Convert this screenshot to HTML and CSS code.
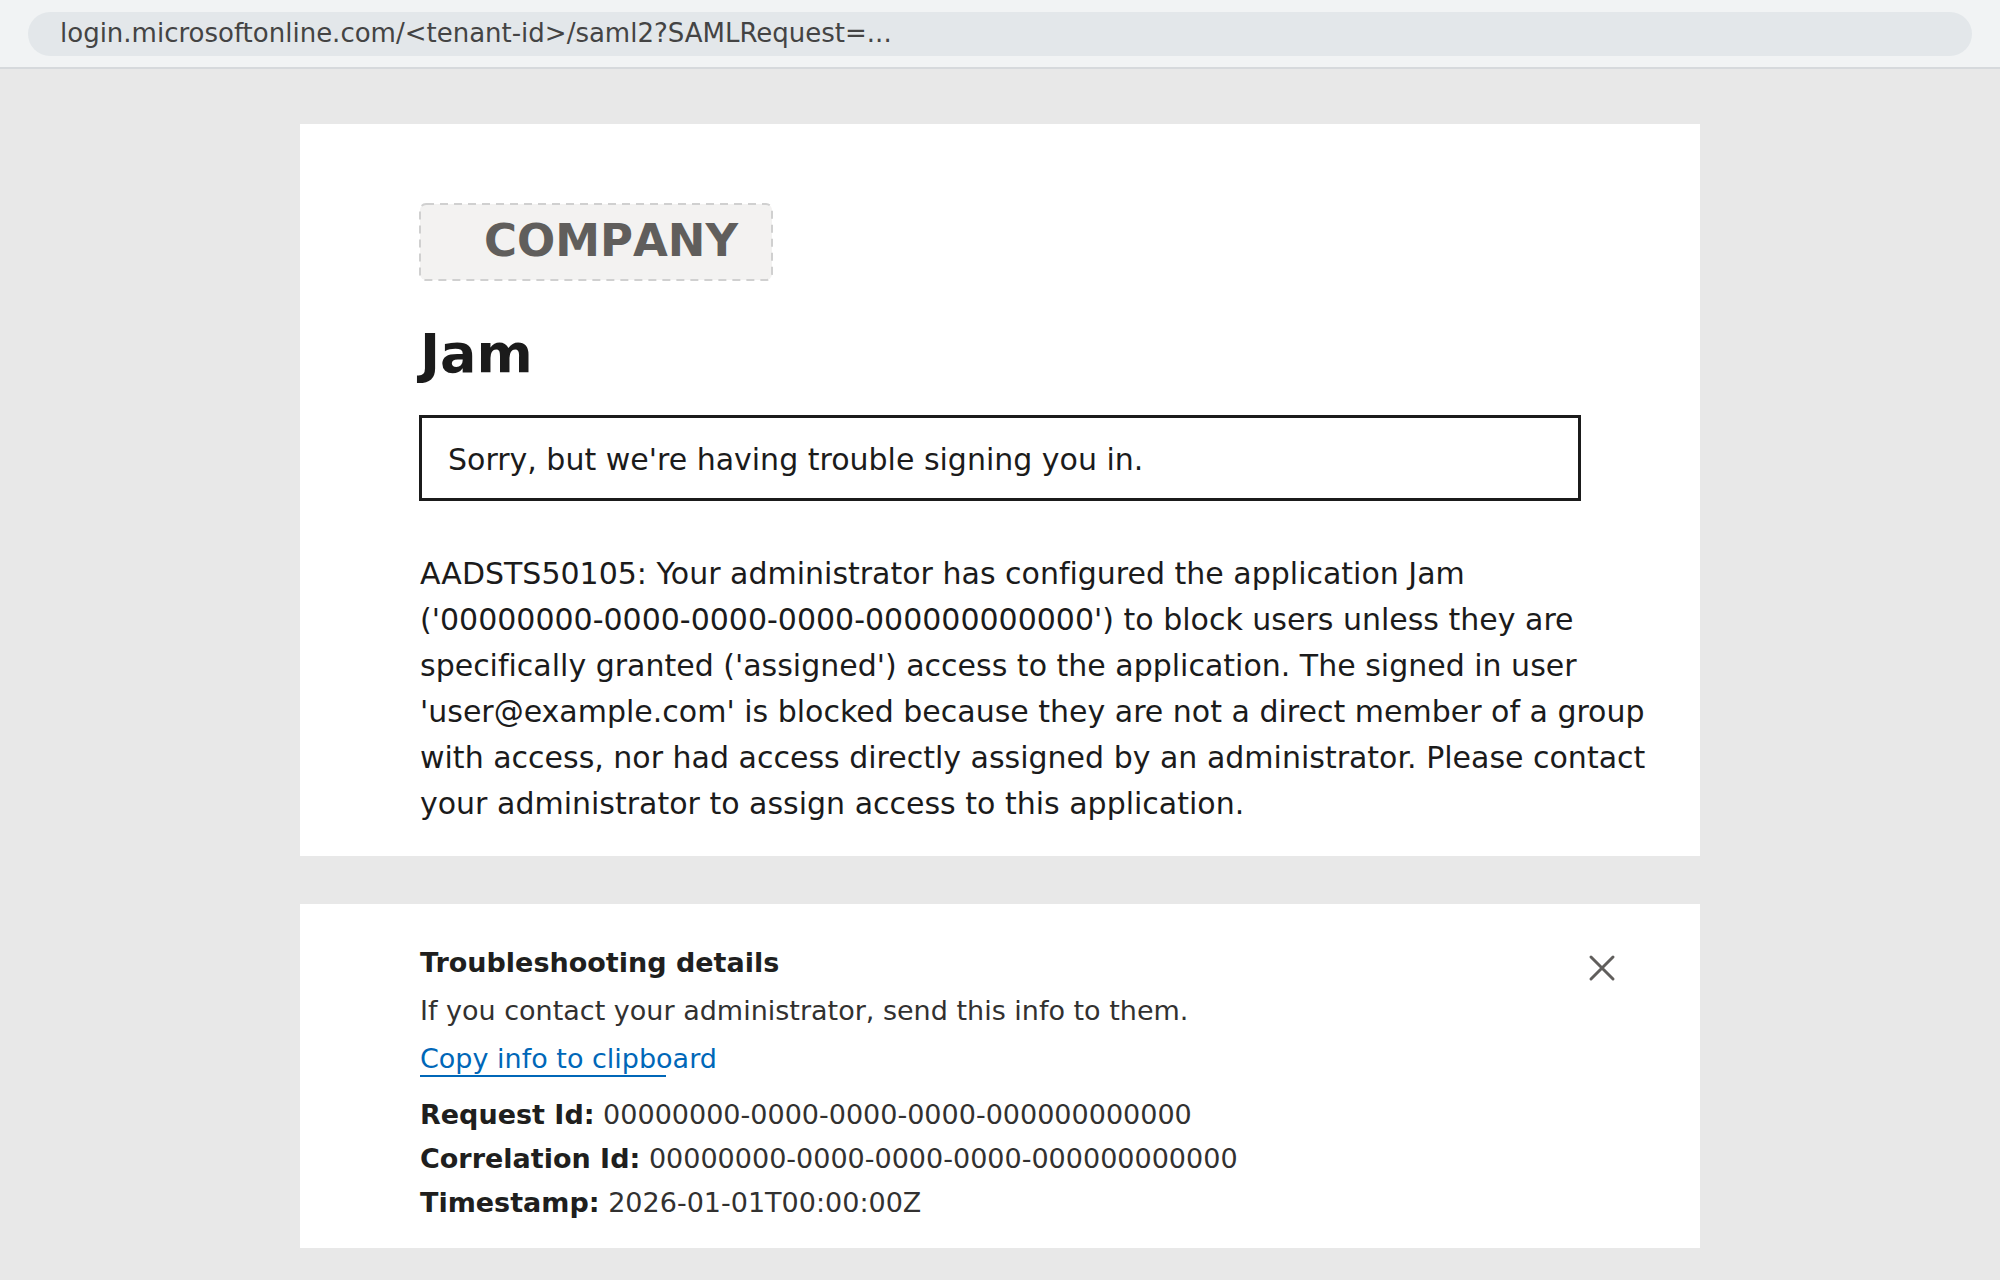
FILE: index.html
```html
<!DOCTYPE html>
<html lang="en">
<head>
  <meta charset="UTF-8">
  <meta name="viewport" content="width=device-width, initial-scale=1.0">
  <title>Sign in to your account</title>
  <link rel="stylesheet" href="styles.css">
</head>
<body>
  <!-- Address bar -->
  <header class="browserBar">
    <input class="addressInput" type="text" aria-label="Address" value="login.microsoftonline.com/&lt;tenant-id&gt;/saml2?SAMLRequest=..." readonly>
  </header>

  <main class="page">
    <!-- Error card -->
    <section class="card errorCard">
      <svg class="companyLogo" viewBox="0 0 352 76" role="img" aria-label="Company">
        <rect class="logoFrame" width="352" height="76" rx="6"/>
        <text class="logoText" x="64" y="52">COMPANY</text>
      </svg>
      <h1 class="appName">Jam</h1>
      <div class="alertBox" role="alert">Sorry, but we're having trouble signing you in.</div>
      <p class="errorText">AADSTS50105: Your administrator has configured the application Jam ('00000000-0000-0000-0000-000000000000') to block users unless they are specifically granted ('assigned') access to the application. The signed in user 'user@example.com' is blocked because they are not a direct member of a group with access, nor had access directly assigned by an administrator. Please contact your administrator to assign access to this application.</p>
    </section>

    <!-- Troubleshooting card -->
    <section class="card detailsCard">
      <div class="detailsContent">
        <h2 class="detailsTitle">Troubleshooting details</h2>
        <p class="detailsText">If you contact your administrator, send this info to them.</p>
        <a class="copyLink" href="#">Copy info to clipboard</a>
        <dl class="infoList">
          <div class="infoRow"><dt>Request Id:</dt> <dd>00000000-0000-0000-0000-000000000000</dd></div>
          <div class="infoRow"><dt>Correlation Id:</dt> <dd>00000000-0000-0000-0000-000000000000</dd></div>
          <div class="infoRow"><dt>Timestamp:</dt> <dd>2026-01-01T00:00:00Z</dd></div>
        </dl>
      </div>
      <button class="closeButton" type="button" aria-label="Close">
        <svg class="closeIcon" viewBox="0 0 28 28">
          <path d="M3 3 L25 25 M25 3 L3 25"/>
        </svg>
      </button>
    </section>
  </main>
</body>
</html>
```
FILE: styles.css
```css
* {
  box-sizing: border-box;
}

body {
  margin: 0;
  background-color: #e8e8e8;
  color: #1b1b1b;
  font-family: Verdana, "DejaVu Sans", sans-serif;
}

h1, h2, p, dl, dd {
  margin: 0;
}

/* Address bar */
.browserBar {
  padding: 12px 28px 11px;
  background-color: #f1f3f4;
  border-bottom: 2px solid #d6d9dc;
}

.addressInput {
  display: block;
  width: 100%;
  height: 44px;
  padding: 0 32px 2px;
  border: none;
  border-radius: 22px;
  background-color: #e3e7ea;
  color: #444;
  font-family: inherit;
  font-size: 26px;
}

/* Cards */
.page {
  display: flex;
  flex-direction: column;
  gap: 48px;
  max-width: 1400px;
  margin: 0 auto;
  padding: 55px 0 32px;
}

.card {
  background-color: white;
}

.errorCard {
  padding: 80px 44px 29px 120px;
}

/* Logo placeholder */
.companyLogo {
  display: block;
  width: 352px;
  height: 76px;
  overflow: visible;
}

.logoFrame {
  fill: #f3f2f1;
  stroke: #d0d0d0;
  stroke-width: 2;
  stroke-dasharray: 8 6;
}

.logoText {
  fill: #605e5c;
  font-size: 45px;
  font-weight: bold;
  font-kerning: none;
}

.appName {
  margin-top: 42px;
  font-size: 54px;
  line-height: 64px;
}

.alertBox {
  margin: 30px 76px 0 0;
  padding: 21px 28px 17px;
  outline: 3px solid #1b1b1b;
  outline-offset: -2px;
  font-size: 30px;
  line-height: 46px;
}

.errorText {
  margin-top: 51px;
  font-size: 30px;
  line-height: 46px;
  font-variant-ligatures: none;
}

/* Troubleshooting details */
.detailsCard {
  display: flex;
  justify-content: space-between;
  align-items: flex-start;
  padding: 35px 84px 23px 120px;
  color: #323130;
  font-size: 27px;
}

.detailsTitle {
  color: #201f1e;
  font-size: 27px;
  line-height: 48px;
}

.detailsText {
  line-height: 48px;
}

.copyLink {
  display: inline-block;
  position: relative;
  color: #0067b8;
  line-height: 48px;
  text-decoration: none;
}

/* underline stops short of the last letters */
.copyLink::after {
  content: "";
  position: absolute;
  left: 0;
  bottom: 6px;
  width: 246px;
  height: 2px;
  background-color: #0067b8;
}

.infoList {
  margin-top: 10px;
  line-height: 44px;
}

.infoRow dt,
.infoRow dd {
  display: inline;
}

.infoRow dt {
  color: #201f1e;
  font-weight: bold;
}

.closeButton {
  margin-top: 15px;
  padding: 0;
  border: none;
  background: none;
  cursor: pointer;
}

.closeIcon {
  display: block;
  width: 28px;
  height: 28px;
  fill: none;
  stroke: #605e5c;
  stroke-width: 3;
  stroke-linecap: round;
}
```
